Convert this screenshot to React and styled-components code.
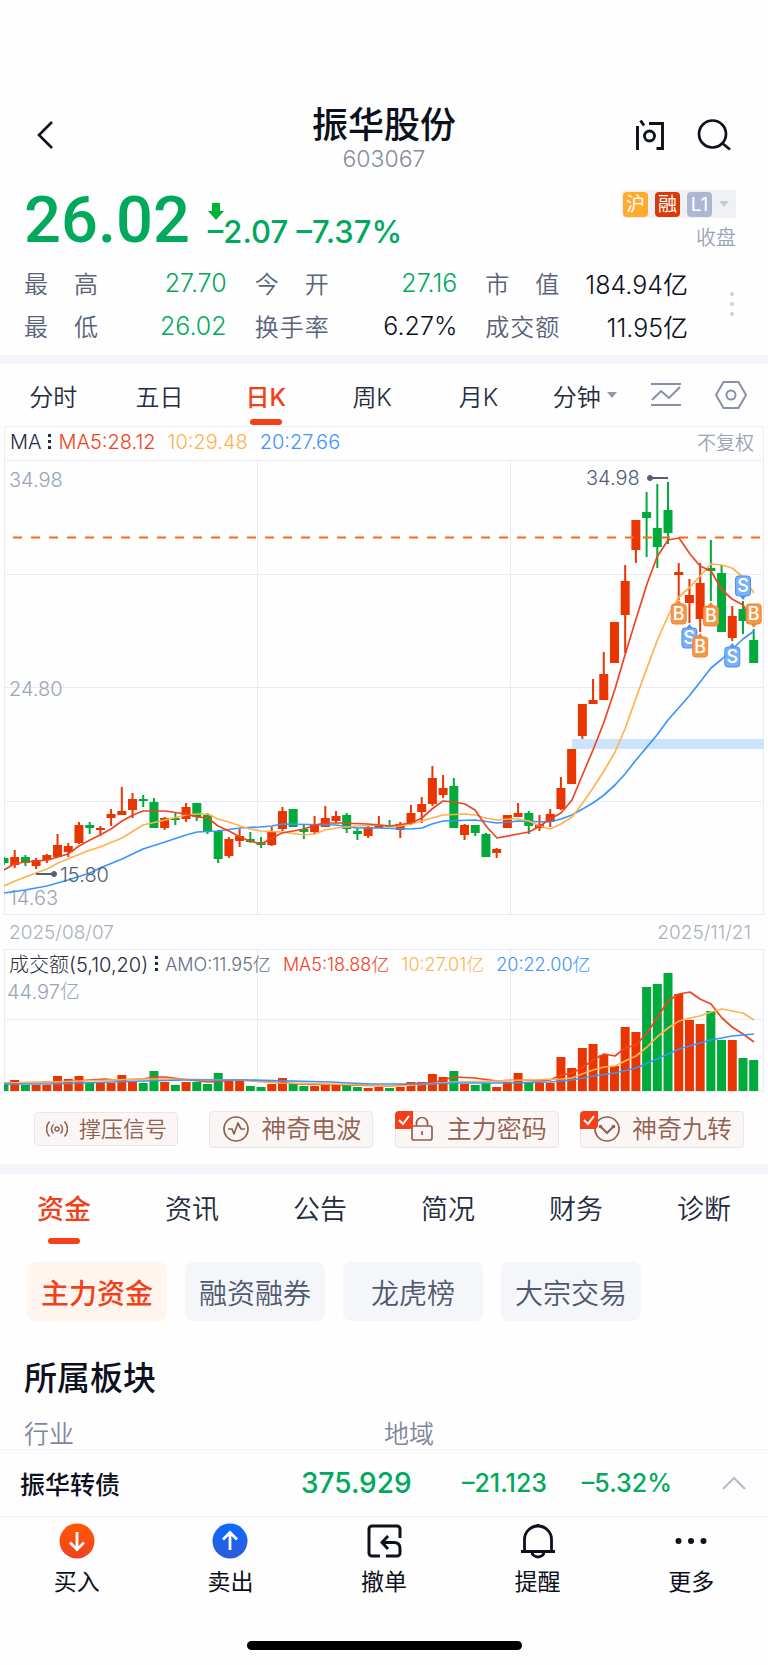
import React from "react";
import styled, { createGlobalStyle } from "styled-components";

const RED = "#e93600";
const GREEN = "#00ab3b";
const AMBER = "#ffb24d";
const BLUE = "#3b95fb";

const priceFont = `Roboto, "Noto Sans CJK SC", sans-serif`;
const textFont = `Inter, "Noto Sans CJK SC", sans-serif`;

const GlobalStyle = createGlobalStyle`
  * {
    box-sizing: border-box;
  }

  body {
    margin: 0;
    background: #fefefe;
    color: #0c111d;
    font-family: ${textFont};
  }

  button {
    margin: 0;
    padding: 0;
    border: 0;
    background: none;
    color: inherit;
    font: inherit;
    cursor: pointer;
  }

  h1, h2, dl, dt, dd {
    margin: 0;
    font-weight: inherit;
  }

  svg {
    display: block;
  }
`;

const Header = styled.header`
  display: grid;
  grid-template-columns: 1fr auto 1fr;
  align-items: center;
  padding: 103px 36px 0;
`;

const HeaderSide = styled.div`
  display: flex;
  justify-content: ${(p) => (p.$end ? "flex-end" : "flex-start")};
  gap: 32px;
  padding-bottom: 4px;
`;

const StockName = styled.h1`
  font-size: 36px;
  font-weight: 500;
  line-height: 44px;
`;

const StockCode = styled.div`
  color: #858ca3;
  font-size: 23px;
  font-weight: 300;
  line-height: 24px;
  text-align: center;
`;

const Quote = styled.section`
  display: flex;
  align-items: flex-end;
  padding: 17px 32px 0 24px;
`;

const Price = styled.div`
  color: #00a95c;
  font-family: ${priceFont};
  font-size: 65px;
  font-weight: 500;
  line-height: 64px;
`;

const Change = styled.div`
  flex: 1;
  padding: 0 0 3px 18px;
  color: #00a95c;
  font-size: 31px;
  font-weight: 500;
  line-height: 34px;

  svg {
    margin-bottom: -5px;
  }
`;

const Status = styled.div`
  display: flex;
  flex-direction: column;
  align-items: flex-end;
  gap: 6px;
  color: #9ba3b9;
  font-size: 20px;
  font-weight: 350;
  line-height: 28px;
`;

const TagButton = styled.button`
  display: flex;
  align-items: center;
  gap: 7px;
  height: 28px;
  padding: 0 7px 0 1px;
  border-radius: 3px;
  background: #f0f1f4;
`;

const Tag = styled.span`
  width: 25px;
  height: 25px;
  border-radius: 4px;
  background: ${(p) => p.$color};
  color: #fff;
  font-size: 19px;
  font-weight: 400;
  line-height: 25px;
  text-align: center;
`;

const Caret = styled.span`
  border: solid transparent;
  border-width: 6px 5px 0;
  border-top-color: ${(p) => p.$color};
`;

const Stats = styled.section`
  display: flex;
  align-items: center;
  padding: 9px 34px 8px 24px;
`;

const StatGrid = styled.dl`
  flex: 1;
  display: grid;
  grid-template-columns: repeat(3, 1fr);
  column-gap: 28px;
`;

const Stat = styled.div`
  display: flex;
  align-items: center;
  justify-content: space-between;
  height: 43px;
  font-size: 24px;

  dt {
    width: 74px;
    color: #59627a;
    font-weight: 350;
    text-align-last: justify;
  }

  dd {
    color: ${(p) => (p.$down ? "#00a95c" : "#0c111d")};
    font-size: 25px;
    font-weight: 350;
  }
`;

const MoreDots = styled.button`
  display: flex;
  flex-direction: column;
  gap: 6px;
  margin-left: 42px;

  i {
    width: 4px;
    height: 4px;
    border-radius: 50%;
    background: #ccd3e0;
  }
`;

const Divider = styled.div`
  height: ${(p) => p.$size}px;
  background: #f3f5fa;
`;

const PeriodBar = styled.nav`
  display: flex;
  align-items: center;
  padding-right: 21px;
`;

const Tab = styled.button`
  position: relative;
  flex: 1;
  display: flex;
  align-items: center;
  justify-content: center;
  gap: 6px;
  height: ${(p) => (p.$large ? 71 : 62)}px;
  padding-bottom: ${(p) => (p.$large ? 4 : 0)}px;
  color: ${(p) => (p.$active ? "#f2401b" : "#242c40")};
  font-size: ${(p) => (p.$large ? 27 : 24)}px;
  font-weight: ${(p) => (p.$active ? 500 : 350)};

  &::after {
    content: "";
    position: absolute;
    bottom: 1px;
    left: 50%;
    width: 32px;
    height: 6px;
    border-radius: 3px;
    background: ${(p) => (p.$active ? "#f2401b" : "transparent")};
    transform: translateX(-50%);
  }
`;

const PeriodTools = styled.div`
  display: flex;
  gap: 34px;
  padding-left: 13px;
  color: #8790a8;
`;

const ChartBox = styled.section`
  margin: 0 4px;
`;

const Legend = styled.div`
  display: flex;
  align-items: center;
  height: 34px;
  padding: 0 9px 4px 5px;
  border: 1px solid #eceef3;
  border-bottom: 0;
  color: #242c40;
  font-size: 20px;
  font-weight: 300;
`;

const LegendItem = styled.span`
  margin-right: ${(p) => p.$gap || 0}px;
  color: ${(p) => p.$color};
`;

const Adjust = styled.button`
  margin-left: auto;
  color: #9ba3b9;
  font-size: 19px;
  font-weight: 350;
`;

const Dots = styled.span`
  display: flex;
  flex-direction: column;
  gap: 3px;
  margin: 0 7px;

  i {
    width: 3px;
    height: 3px;
    background: #242c40;
  }
`;

const Chart = styled.svg`
  width: 100%;
  height: auto;
  font-size: 20px;
  font-weight: 300;
`;

const Dates = styled.div`
  display: flex;
  align-items: center;
  justify-content: space-between;
  height: 34px;
  padding: 0 13px 0 5px;
  color: #aab0c2;
  font-size: 19px;
  font-weight: 300;
`;

const VolumeBox = styled.div`
  position: relative;
`;

const VolumeLegend = styled.div`
  position: absolute;
  top: 0;
  left: 5px;
  display: flex;
  align-items: center;
  height: 28px;
  color: #636c83;
  font-size: 18px;
  font-weight: 300;
  white-space: nowrap;
`;

const VolumeTitle = styled.span`
  color: #242c40;
  font-size: 20px;
`;

const Signals = styled.section`
  display: flex;
  align-items: center;
  justify-content: space-between;
  height: 72px;
  padding: 2px 24px 0 34px;
`;

const SignalButton = styled.button`
  position: relative;
  display: flex;
  align-items: center;
  justify-content: space-between;
  width: ${(p) => (p.$small ? 144 : 164)}px;
  height: ${(p) => (p.$small ? 34 : 37)}px;
  margin-right: ${(p) => (p.$small ? 10 : 0)}px;
  padding: ${(p) => (p.$small ? "0 10px 0 11px" : "0 11px 0 13px")};
  border: 1px solid #eee4e2;
  border-radius: 4px;
  background: #faf6f5;
  color: #93604f;
  font-size: ${(p) => (p.$small ? 22 : 25)}px;
  font-weight: 350;
  line-height: 32px;
`;

const CheckBadge = styled.span`
  position: absolute;
  top: -1px;
  left: -1px;
  width: 18px;
  height: 18px;
  border-radius: 4px 0 4px 0;
  background: #f2401b;
`;

const InfoTabs = styled.nav`
  display: flex;
`;

const Pills = styled.div`
  display: flex;
  gap: 18px;
  padding: 17px 27px 0;
`;

const Pill = styled.button`
  width: 140px;
  height: 59px;
  border-radius: 8px;
  background: ${(p) => (p.$active ? "#fff5ef" : "#f4f6fa")};
  color: ${(p) => (p.$active ? "#f2401b" : "#4f586f")};
  font-size: 28px;
  font-weight: ${(p) => (p.$active ? 500 : 350)};
`;

const Sector = styled.section`
  padding: 35px 24px 0;

  h2 {
    font-size: 33px;
    font-weight: 500;
    line-height: 44px;
  }
`;

const SectorHead = styled.div`
  display: grid;
  grid-template-columns: 1fr 1fr;
  margin-top: 19px;
  color: #7e86a0;
  font-size: 25px;
  font-weight: 350;
  line-height: 30px;
`;

const BondRow = styled.section`
  display: flex;
  align-items: center;
  height: 68px;
  padding: 0 22px 0 20px;
  border: solid #f1f3f7;
  border-width: 1px 0;
  color: #00a95c;
  font-size: 25px;
  font-weight: 500;
`;

const BondName = styled.span`
  flex: 1;
  color: #0c111d;
`;

const BondPrice = styled.span`
  width: 110px;
  font-size: 28px;
`;

const BondChange = styled.span`
  width: ${(p) => p.$width}px;
  text-align: right;
`;

const BondToggle = styled.button`
  margin-left: 50px;
`;

const ActionBar = styled.nav`
  display: flex;
  padding: 6px 0 45px;
`;

const Action = styled.button`
  flex: 1;
  display: flex;
  flex-direction: column;
  align-items: center;
  gap: 9px;
  font-size: 23px;
  line-height: 28px;
`;

const HomeIndicator = styled.div`
  width: 275px;
  height: 9px;
  margin: 0 auto 15px;
  border-radius: 5px;
  background: #000;
`;

const stats = [
  { label: "最高", value: "27.70", down: true },
  { label: "今开", value: "27.16", down: true },
  { label: "市值", value: "184.94亿" },
  { label: "最低", value: "26.02", down: true },
  { label: "换手率", value: "6.27%" },
  { label: "成交额", value: "11.95亿" },
];

// [up, high, body top, body bottom, low, volume top]
const days = [
  [0, 857, 858, 863, 865, 1084],
  [1, 850, 857, 865, 868, 1080],
  [0, 855, 857, 863, 866, 1085],
  [1, 858, 860, 866, 869, 1085],
  [1, 854, 855, 860, 863, 1085],
  [1, 834, 845, 857, 857, 1076],
  [1, 843, 846, 852, 857, 1079],
  [1, 822, 825, 843, 844, 1076],
  [0, 822, 825, 828, 834, 1083],
  [1, 826, 828, 830, 836, 1083],
  [1, 809, 814, 818, 826, 1083],
  [1, 787, 811, 815, 815, 1075],
  [1, 793, 799, 810, 818, 1082],
  [0, 795, 799, 801, 807, 1083],
  [0, 798, 802, 828, 828, 1071],
  [1, 817, 818, 828, 830, 1082],
  [0, 813, 818, 820, 825, 1085],
  [1, 803, 807, 819, 822, 1082],
  [0, 803, 803, 817, 821, 1082],
  [0, 813, 815, 831, 834, 1084],
  [0, 830, 831, 859, 863, 1073],
  [1, 837, 839, 856, 858, 1081],
  [1, 829, 836, 841, 847, 1081],
  [0, 832, 839, 842, 843, 1086],
  [0, 837, 842, 845, 848, 1087],
  [1, 827, 831, 845, 846, 1084],
  [1, 807, 811, 829, 831, 1078],
  [0, 809, 809, 827, 827, 1084],
  [0, 825, 829, 832, 839, 1086],
  [1, 816, 825, 832, 834, 1086],
  [1, 806, 818, 827, 827, 1084],
  [1, 811, 816, 821, 823, 1085],
  [0, 813, 815, 829, 833, 1085],
  [0, 828, 831, 834, 840, 1087],
  [1, 826, 827, 836, 838, 1088],
  [1, 816, 826, 828, 828, 1087],
  [0, 820, 825, 827, 827, 1088],
  [1, 822, 824, 830, 838, 1087],
  [1, 805, 813, 823, 825, 1082],
  [1, 797, 804, 812, 823, 1082],
  [1, 766, 778, 804, 806, 1074],
  [1, 775, 788, 795, 798, 1077],
  [0, 778, 786, 828, 828, 1071],
  [1, 824, 825, 835, 840, 1084],
  [0, 825, 825, 833, 836, 1085],
  [0, 833, 834, 857, 857, 1083],
  [1, 848, 849, 853, 858, 1087],
  [1, 815, 815, 828, 828, 1082],
  [1, 803, 813, 817, 817, 1073],
  [0, 811, 813, 826, 834, 1082],
  [1, 815, 824, 828, 831, 1083],
  [1, 809, 814, 822, 827, 1083],
  [1, 777, 788, 809, 810, 1057],
  [1, 749, 749, 784, 784, 1068],
  [1, 704, 704, 736, 739, 1048],
  [1, 679, 700, 704, 704, 1044],
  [1, 652, 674, 700, 700, 1055],
  [1, 622, 622, 663, 663, 1066],
  [1, 565, 581, 615, 653, 1027],
  [1, 520, 520, 550, 563, 1032],
  [0, 492, 512, 518, 557, 987],
  [0, 484, 528, 547, 568, 984],
  [0, 482, 510, 533, 544, 973],
  [1, 563, 572, 575, 600, 994],
  [1, 579, 595, 603, 623, 1020],
  [1, 563, 583, 619, 632, 1024],
  [0, 540, 568, 571, 601, 1011],
  [0, 565, 573, 632, 632, 1040],
  [1, 606, 616, 638, 641, 1040],
  [0, 601, 609, 621, 634, 1058],
  [0, 629, 640, 663, 663, 1060],
];

const dayX = (i) => 4 + i * 10.71;

const priceLines = [
  {
    color: BLUE,
    points:
      "4,893 25,890 47,886 68,880 90,873 100,868 122,859 143,849 165,842 186,835 197,832 218,831 240,828 260,827 272,826 282,824 336,825 357,828 379,828 411,829 422,828 432,824 443,821 475,820 497,823 510,822 518,821 550,822 561,819 572,815 593,803 604,795 615,785 625,774 636,760 657,735 668,720 690,695 711,668 722,659 743,639 754,631",
  },
  {
    color: AMBER,
    points:
      "4,886 15,881 36,873 47,869 58,863 90,850 100,847 122,838 143,825 165,820 186,815 197,814 208,814 218,819 229,822 240,826 250,829 261,831 282,832 304,835 315,834 325,830 336,828 357,826 379,825 390,826 400,826 411,824 422,821 432,818 443,815 465,814 475,815 486,818 497,820 510,819 518,819 529,821 540,826 550,829 561,824 572,817 582,804 593,788 604,771 615,752 625,729 636,698 647,668 657,641 668,616 679,597 690,587 711,564 722,565 732,568 743,577 754,593",
  },
  {
    color: "#ee4524",
    points:
      "4,870 14,864 25,862 48,860 68,854 79,846 90,840 100,835 111,829 122,821 133,815 143,811 165,811 186,814 197,817 208,818 218,826 229,831 240,837 250,841 261,844 272,838 282,833 304,829 315,825 325,823 340,823 368,824 390,826 411,823 422,818 432,809 443,801 454,802 465,804 475,810 486,826 497,838 518,834 529,832 540,826 550,819 561,813 572,800 582,776 593,750 604,722 615,689 625,655 636,619 647,584 657,557 668,540 679,538 690,554 700,566 711,571 722,590 732,599 743,605 754,622",
  },
];

const volumeLines = [
  {
    color: "#ee4524",
    points:
      "4,1083 58,1082 90,1080 105,1079 115,1080 143,1079 154,1077 165,1077 190,1080 208,1082 240,1080 300,1084 390,1086 423,1083 432,1083 454,1077 475,1078 497,1081 518,1080 540,1081 550,1080 561,1075 572,1073 582,1068 593,1060 604,1054 615,1056 625,1048 636,1045 647,1033 657,1018 668,1001 679,994 690,992 700,999 711,1004 722,1018 732,1027 743,1034 754,1042",
  },
  {
    color: AMBER,
    points:
      "4,1083 50,1082 143,1079 165,1079 240,1080 280,1083 330,1084 400,1086 454,1082 497,1081 529,1080 561,1079 572,1078 582,1074 593,1070 604,1067 615,1066 625,1061 636,1056 647,1047 657,1037 668,1028 679,1021 690,1018 700,1016 711,1012 722,1009 732,1011 743,1013 754,1020",
  },
  {
    color: BLUE,
    points:
      "4,1084 50,1084 143,1081 186,1080 250,1080 330,1082 370,1084 430,1084 454,1083 507,1083 550,1082 572,1080 593,1076 615,1073 636,1068 657,1059 679,1049 700,1043 711,1040 732,1036 754,1034",
  },
];

// trades placed on the chart, y is the top of the box
const trades = [
  { day: 69, side: "S", y: 576, below: false },
  { day: 63, side: "B", y: 604, below: true },
  { day: 66, side: "B", y: 606, below: true },
  { day: 64, side: "S", y: 628, below: true },
  { day: 65, side: "B", y: 637, below: true },
  { day: 68, side: "S", y: 647, below: true },
  { day: 70, side: "B", y: 604, below: false },
];

const TradeMark = ({ day, side, y, below }) => {
  const x = dayX(day);
  const buy = side === "B";
  const edge = buy ? "#f5803a" : "#4a90f8";
  const tip = below
    ? `${x - 3},${y} ${x},${y - 4} ${x + 3},${y}`
    : `${x - 3},${y + 20} ${x},${y + 24} ${x + 3},${y + 20}`;

  return (
    <g>
      <polygon points={tip} fill={edge} />
      <rect
        x={x - 7.5}
        y={y}
        width="15"
        height="20"
        rx="3"
        fill={buy ? "#f09a48" : "#79b1f6"}
        stroke={edge}
      />
      <text
        x={x}
        y={y + 16}
        fill="#fff"
        fontSize="18"
        fontWeight="500"
        textAnchor="middle"
      >
        {side}
      </text>
    </g>
  );
};

const PriceChart = () => (
  <Chart viewBox="4 460 760 455" role="img" aria-label="日K线图">
    <g stroke="#e9ebf2" fill="none">
      <path d="M4.5 460V914.5H763.5V460M4 460.5H764M4 574.5H764M4 687.5H764M4 801.5H764" />
      <path d="M257.5 460V914M510.5 460V914" />
    </g>
    <rect x="572" y="739" width="192" height="10" fill="#cce3fd" />
    <g fill="#9ba3b9">
      <text x="9" y="487">34.98</text>
      <text x="9" y="696">24.80</text>
      <text x="9" y="905">14.63</text>
    </g>
    {days.map(([up, high, top, bottom, low], i) => (
      <g key={i} fill={up ? RED : GREEN}>
        <rect x={dayX(i) - 1} y={high} width="2" height={low - high} />
        <rect x={dayX(i) - 4.5} y={top} width="9" height={bottom - top} />
      </g>
    ))}
    <path
      d="M13 537.5H764"
      stroke="#f9671c"
      strokeWidth="2"
      strokeDasharray="9 9"
    />
    {priceLines.map((line) => (
      <polyline
        key={line.color}
        points={line.points}
        fill="none"
        stroke={line.color}
        strokeWidth="1.7"
        strokeLinejoin="round"
      />
    ))}
    <g fill="#525c74" stroke="#525c74">
      <path d="M36 874H54M650 478H668" strokeWidth="2" />
      <circle cx="54" cy="874" r="2.5" />
      <circle cx="650" cy="478" r="2.5" />
    </g>
    <g fill="#525c74">
      <text x="60" y="882">15.80</text>
      <text x="586" y="485">34.98</text>
    </g>
    {trades.map((trade) => (
      <TradeMark key={trade.day} {...trade} />
    ))}
  </Chart>
);

const VolumeChart = () => (
  <Chart viewBox="4 949 760 143" role="img" aria-label="成交额">
    <path
      d="M4.5 1092V949.5H763.5V1092M4 1019.5H764M257.5 949V1092M510.5 949V1092M4 1091.5H764"
      stroke="#e9ebf2"
      fill="none"
    />
    <text x="7" y="999" fill="#9ba3b9">
      44.97亿
    </text>
    {days.map((day, i) => (
      <rect
        key={i}
        x={dayX(i) - 4.5}
        y={day[5]}
        width="9"
        height={1091 - day[5]}
        fill={day[0] ? RED : GREEN}
      />
    ))}
    {volumeLines.map((line) => (
      <polyline
        key={line.color}
        points={line.points}
        fill="none"
        stroke={line.color}
        strokeWidth="1.7"
        strokeLinejoin="round"
      />
    ))}
  </Chart>
);

const LegendDots = () => (
  <Dots>
    <i />
    <i />
    <i />
  </Dots>
);

const Line = ({ children, width, height = width, weight = 2, ...rest }) => (
  <svg
    width={width}
    height={height}
    viewBox={`0 0 ${width} ${height}`}
    fill="none"
    stroke="currentColor"
    strokeWidth={weight}
    {...rest}
  >
    {children}
  </svg>
);

const WaveIcon = () => (
  <Line width={22} weight={1.5}>
    <circle cx="11" cy="11" r="2" />
    <path d="M7.5 6.5a6 6 0 0 0 0 9M14.5 6.5a6 6 0 0 1 0 9M3.5 3.5a11 11 0 0 0 0 15M18.5 3.5a11 11 0 0 1 0 15" />
  </Line>
);

const PulseIcon = () => (
  <Line width={26} weight={1.7}>
    <circle cx="13" cy="13" r="12" />
    <path d="M5 13h4l2 5 4-11 3 6h4" strokeLinejoin="round" />
  </Line>
);

const LockIcon = () => (
  <Line width={26} weight={1.7}>
    <rect x="3" y="10" width="20" height="14" rx="2" />
    <path d="M7.5 10V7a5.5 5.5 0 0 1 11 0v3M13 15v4" />
  </Line>
);

const NineIcon = () => (
  <Line width={26} weight={1.7}>
    <circle cx="13" cy="13" r="12" />
    <path d="M6 10l7 7 7-7" strokeWidth="2" />
    <circle cx="6.5" cy="10.5" r="1" />
    <circle cx="19.5" cy="10.5" r="1" />
  </Line>
);

const Checked = () => (
  <CheckBadge>
    <Line width={18} weight={2} color="#fff">
      <path d="M4 9l4 4 6-8" />
    </Line>
  </CheckBadge>
);

const BuyIcon = () => (
  <Line width={36} weight={2.8} color="#fff">
    <defs>
      <linearGradient id="buy" x2="0" y2="1">
        <stop stopColor="#ff5a00" />
        <stop offset="1" stopColor="#ef4123" />
      </linearGradient>
    </defs>
    <circle cx="18" cy="18" r="17.5" fill="url(#buy)" stroke="none" />
    <path d="M18 9v17M11 19.5l7 7 7-7" />
  </Line>
);

const SellIcon = () => (
  <Line width={36} weight={2.8} color="#fff">
    <defs>
      <linearGradient id="sell" x2="0" y2="1">
        <stop stopColor="#0d69ff" />
        <stop offset="1" stopColor="#2f5bd8" />
      </linearGradient>
    </defs>
    <circle cx="18" cy="18" r="17.5" fill="url(#sell)" stroke="none" />
    <path d="M18 27V10M11 16.5l7-7 7 7" />
  </Line>
);

const CancelIcon = () => (
  <Line width={36} weight={3}>
    <path d="M34 15V6a3 3 0 0 0-3-3H6a3 3 0 0 0-3 3v24a3 3 0 0 0 3 3h8" />
    <path d="M22 13l-6 6.5 6 6.5" />
    <path d="M17 19.5h11c4 0 6 2.5 6 6v4.5a3 3 0 0 1-3 3H20" />
  </Line>
);

const BellIcon = () => (
  <Line width={36} weight={2.8}>
    <path d="M4.5 28V16.5a13.5 13.5 0 0 1 27 0V28" />
    <path d="M1 28.5h34M18 1v3" />
    <path d="M12 29a6 5 0 0 0 12 0" />
  </Line>
);

const MoreIcon = () => (
  <Line width={36}>
    <g fill="currentColor" stroke="none">
      <circle cx="5.5" cy="18" r="3" />
      <circle cx="18" cy="18" r="3" />
      <circle cx="30.5" cy="18" r="3" />
    </g>
  </Line>
);

const periods = ["分时", "五日", "日K", "周K", "月K"];
const infoTabs = ["资金", "资讯", "公告", "简况", "财务", "诊断"];
const pills = ["主力资金", "融资融券", "龙虎榜", "大宗交易"];

const actions = [
  { label: "买入", Icon: BuyIcon },
  { label: "卖出", Icon: SellIcon },
  { label: "撤单", Icon: CancelIcon },
  { label: "提醒", Icon: BellIcon },
  { label: "更多", Icon: MoreIcon },
];

const App = () => {
  return (
    <>
      <GlobalStyle />
      <Header>
        <HeaderSide>
          <button aria-label="返回">
            <Line width={18} height={28} weight={2.6}>
              <path d="M16 1L3 14l13 13" />
            </Line>
          </button>
        </HeaderSide>
        <div>
          <StockName>振华股份</StockName>
          <StockCode>603067</StockCode>
        </div>
        <HeaderSide $end>
          <button aria-label="问">
            <Line width={30} height={32} weight={2.9}>
              <path d="M2.5 7v24M5.5 1.5l3.5 5M14 4.5h13.5v25h-6" />
              <circle cx="14.5" cy="17" r="5" />
            </Line>
          </button>
          <button aria-label="搜索">
            <Line width={35} height={32} weight={2.7}>
              <circle cx="15.5" cy="15" r="13.5" />
              <path d="M25 24l8 6.5" />
            </Line>
          </button>
        </HeaderSide>
      </Header>

      <Quote>
        <Price>26.02</Price>
        <Change>
          <svg width="16" height="17" viewBox="0 0 16 17" fill="#00b336">
            <path d="M4 0h8v8h4l-8 9-8-9h4z" />
          </svg>
          –2.07 –7.37%
        </Change>
        <Status>
          <TagButton aria-label="标签">
            <Tag $color="#ffab2e">沪</Tag>
            <Tag $color="#d83a0c">融</Tag>
            <Tag $color="#adb7d3">L1</Tag>
            <Caret $color="#c3cad8" />
          </TagButton>
          收盘
        </Status>
      </Quote>

      <Stats>
        <StatGrid>
          {stats.map((stat) => (
            <Stat key={stat.label} $down={stat.down}>
              <dt>{stat.label}</dt>
              <dd>{stat.value}</dd>
            </Stat>
          ))}
        </StatGrid>
        <MoreDots aria-label="更多行情">
          <i />
          <i />
          <i />
        </MoreDots>
      </Stats>

      <Divider $size={9} />

      <PeriodBar>
        {periods.map((name) => (
          <Tab key={name} $active={name === "日K"}>
            {name}
          </Tab>
        ))}
        <Tab>
          分钟
          <Caret $color="#8d97ae" />
        </Tab>
        <PeriodTools>
          <button aria-label="画线">
            <Line width={30} height={26} weight={2}>
              <path d="M0 2h30M0 23h30M1 18l9-9 8 7L29 5" />
            </Line>
          </button>
          <button aria-label="设置">
            <Line width={32} height={28} weight={2}>
              <path d="M8.5 1h15L31 14l-7.5 13h-15L1 14z" />
              <circle cx="16" cy="14" r="4.5" />
            </Line>
          </button>
        </PeriodTools>
      </PeriodBar>

      <ChartBox>
        <Legend>
          MA
          <LegendDots />
          <LegendItem $color="#f2401b" $gap={12}>
            MA5:28.12
          </LegendItem>
          <LegendItem $color={AMBER} $gap={12}>
            10:29.48
          </LegendItem>
          <LegendItem $color={BLUE}>20:27.66</LegendItem>
          <Adjust>不复权</Adjust>
        </Legend>
        <PriceChart />
        <Dates>
          <span>2025/08/07</span>
          <span>2025/11/21</span>
        </Dates>
        <VolumeBox>
          <VolumeChart />
          <VolumeLegend>
            <VolumeTitle>成交额(5,10,20)</VolumeTitle>
            <LegendDots />
            <LegendItem $gap={12}>AMO:11.95亿</LegendItem>
            <LegendItem $color="#f2401b" $gap={12}>
              MA5:18.88亿
            </LegendItem>
            <LegendItem $color={AMBER} $gap={12}>
              10:27.01亿
            </LegendItem>
            <LegendItem $color={BLUE}>20:22.00亿</LegendItem>
          </VolumeLegend>
        </VolumeBox>
      </ChartBox>

      <Signals>
        <SignalButton $small>
          <WaveIcon />
          撑压信号
        </SignalButton>
        <SignalButton>
          <PulseIcon />
          神奇电波
        </SignalButton>
        <SignalButton aria-pressed="true">
          <LockIcon />
          主力密码
          <Checked />
        </SignalButton>
        <SignalButton aria-pressed="true">
          <NineIcon />
          神奇九转
          <Checked />
        </SignalButton>
      </Signals>

      <Divider $size={10} />

      <InfoTabs>
        {infoTabs.map((name) => (
          <Tab key={name} $large $active={name === "资金"}>
            {name}
          </Tab>
        ))}
      </InfoTabs>
      <Pills>
        {pills.map((name) => (
          <Pill key={name} $active={name === "主力资金"}>
            {name}
          </Pill>
        ))}
      </Pills>

      <Sector>
        <h2>所属板块</h2>
        <SectorHead>
          <span>行业</span>
          <span>地域</span>
        </SectorHead>
      </Sector>

      <BondRow>
        <BondName>振华转债</BondName>
        <BondPrice>375.929</BondPrice>
        <BondChange $width={136}>–21.123</BondChange>
        <BondChange $width={125}>–5.32%</BondChange>
        <BondToggle aria-label="展开">
          <Line width={24} height={14} weight={2} color="#b3bacb">
            <path d="M1 13L12 2l11 11" />
          </Line>
        </BondToggle>
      </BondRow>

      <ActionBar>
        {actions.map(({ label, Icon }) => (
          <Action key={label}>
            <Icon />
            {label}
          </Action>
        ))}
      </ActionBar>
      <HomeIndicator />
    </>
  );
};

export default App;
